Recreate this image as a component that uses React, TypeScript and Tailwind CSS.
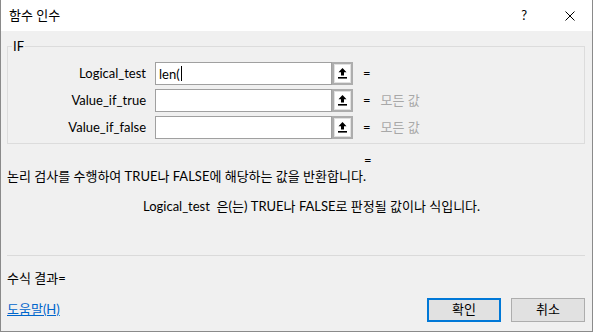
import React from "react"

const font = { fontFamily: "Lato, 'Noto Sans CJK KR', sans-serif" }

function PickButton() {
  return (
    <div className="w-[21px] h-[23px] border-2 border-[#adadad] bg-[#e1e1e1] p-[1px] flex">
      <div className="flex-1 bg-white flex items-center justify-center">
        <svg width="9" height="11" viewBox="0 0 9 11">
          <path d="M4.5 0 L8.5 4.2 H6 V7.5 H3 V4.2 H0.5 Z" fill="#000" />
          <rect x="0" y="9" width="9" height="1.6" fill="#000" />
        </svg>
      </div>
    </div>
  )
}

function ArgRow({ label, value, hint, caret }: { label: string; value?: string; hint?: string; caret?: boolean }) {
  return (
    <div className="flex items-center h-[23px]">
      <div className="w-[138px] text-right text-[13px] leading-[23px] text-black">{label}</div>
      <div className="ml-[9px] w-[177px] h-[23px] bg-white border border-[#a0a0a0] flex items-center pl-[3px] text-[13px] leading-[16px] text-black">
        {value}
        {caret && <span className="inline-block w-px h-[15px] bg-black ml-[1px]" />}
      </div>
      <PickButton />
      <span className="ml-[10px] text-[13px] text-black">=</span>
      {hint && <span className="ml-[10px] text-[13px] text-[#a8a8a8]">{hint}</span>}
    </div>
  )
}

export default function App() {
  return (
    <div className="w-[593px] h-[334px] bg-white overflow-hidden" style={font}>
      <div className="h-[332px] flex flex-col border-l border-r border-b border-[#8a8a8a]">
        <div className="h-[31px] bg-white flex items-center pl-[8px] shrink-0">
          <span className="text-[13px] text-black">함수 인수</span>
          <span className="ml-auto text-[13px] text-black">?</span>
          <svg className="ml-[38px] mr-[17px]" width="10" height="10" viewBox="0 0 10 10">
            <path d="M0.5 0.5 L9.5 9.5 M9.5 0.5 L0.5 9.5" stroke="#000" strokeWidth="1" />
          </svg>
        </div>
        <div className="flex-1 bg-[#f0f0f0] flex flex-col">
          <div className="relative mt-[15px] ml-[6px] mr-[7px] h-[98px] border border-[#dcdcdc] pt-[15px] flex flex-col gap-[4px]">
            <span className="absolute left-[4px] -top-[9px] px-[1px] bg-[#f0f0f0] text-[13px] leading-[16px] text-black">IF</span>
            <ArgRow label="Logical_test" value="len(" caret />
            <ArgRow label="Value_if_true" hint="모든 값" />
            <ArgRow label="Value_if_false" hint="모든 값" />
          </div>
          <div className="mt-[8px] h-[16px] pl-[363px] text-[13px] leading-[16px] text-black">=</div>
          <div className="pl-[6px] h-[16px] text-[13px] leading-[16px] text-black">
            논리 검사를 수행하여 TRUE나 FALSE에 해당하는 값을 반환합니다.
          </div>
          <div className="mt-[14px] pl-[142px] h-[16px] text-[13px] leading-[16px] text-black whitespace-pre">
            {"Logical_test  은(는) TRUE나 FALSE로 판정될 값이나 식입니다."}
          </div>
          <div className="mt-[41px] ml-[6px] mr-[7px] h-px bg-[#dadada]" />
          <div className="mt-[14px] pl-[6px] h-[16px] text-[13px] leading-[16px] text-black">수식 결과=</div>
          <div className="mt-[12px] flex items-center pl-[6px] pr-[7px]">
            <span className="text-[13px] text-[#0066cc] underline">도움말(H)</span>
            <div className="ml-auto w-[74px] h-[24px] border-2 border-[#0078d7] bg-[#e1e1e1] flex items-center justify-center text-[13px] text-black">
              확인
            </div>
            <div className="ml-[10px] w-[74px] h-[24px] border border-[#adadad] bg-[#e1e1e1] flex items-center justify-center text-[13px] text-black">
              취소
            </div>
          </div>
        </div>
      </div>
    </div>
  )
}
